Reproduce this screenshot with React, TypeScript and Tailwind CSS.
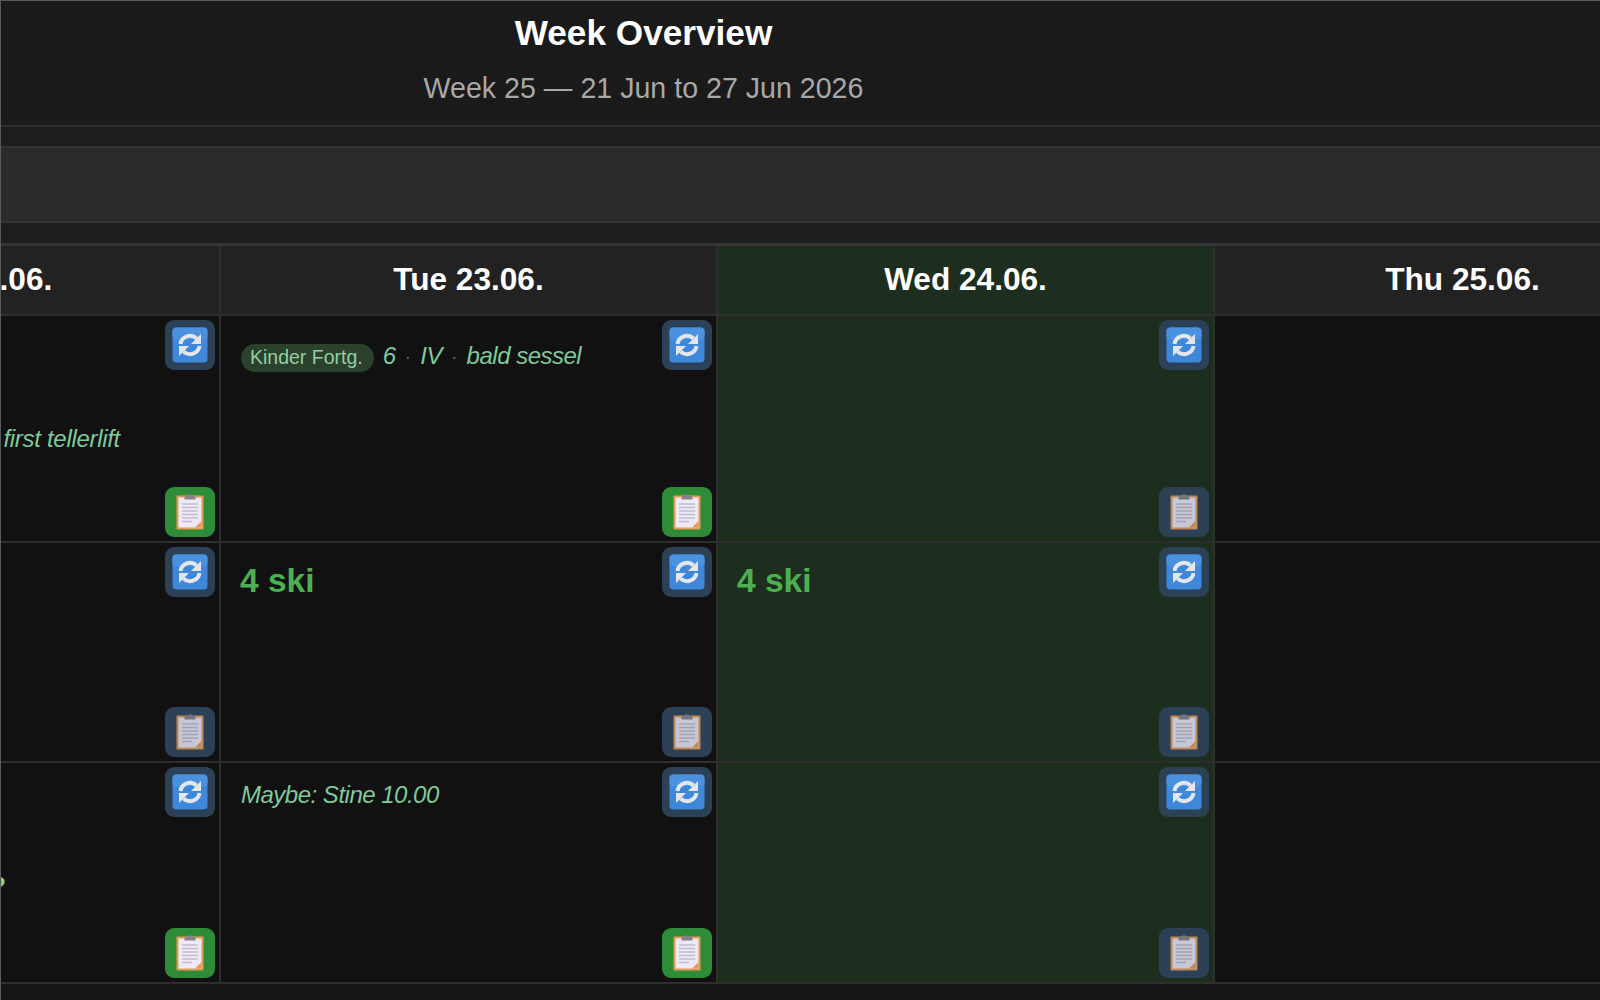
import React from "react";

const SyncIcon = () => (
  <svg width="36" height="36" viewBox="0 0 36 36" className="blur-[0.7px]">
    <rect x="0.5" y="0.5" width="35" height="35" rx="4" fill="#3f87d9" />
    <rect x="0.5" y="0.5" width="35" height="12" rx="4" fill="#4a92e0" />
    <g fill="none" stroke="#e3e6ec" strokeWidth="4">
      <path d="M8.5 17A9.5 9.5 0 0 1 24.5 11.5" />
      <path d="M27.5 19A9.5 9.5 0 0 1 11.5 24.5" />
    </g>
    <path d="M29 7V17H19Z" fill="#e3e6ec" />
    <path d="M7 29V19H17Z" fill="#e3e6ec" />
  </svg>
);

const ClipIcon = ({ dim }: { dim?: boolean }) => (
  <svg width="28" height="36" viewBox="0 0 28 36" className={dim ? "opacity-80 blur-[0.6px]" : "blur-[0.6px]"}>
    <rect x="0.5" y="1.5" width="27" height="34" rx="1" fill="#e59b55" />
    <rect x="2.5" y="3.5" width="23" height="30" fill="#eee9f6" />
    <g stroke="#c0bec9" strokeWidth="1.3">
      <path d="M6 10H22M6 13.5H22M6 17H22M6 20.5H22M6 24H22M6 27.5H16" />
    </g>
    <path d="M8.5 5.5V2.5L11 2 12.5 0.5H15.5L17 2 19.5 2.5V5.5Z" fill="#85828e" />
    <path d="M19 33.5L25.5 27V33.5Z" fill="#e59b55" />
  </svg>
);

const CellButton = ({ kind, on }: { kind: "sync" | "clip"; on?: boolean }) => (
  <div
    className={`flex h-[50px] w-[50px] items-center justify-center rounded-[9px] ${
      on ? "bg-[#2e8b38]" : "bg-[#2c4156]"
    }`}
  >
    {kind === "sync" ? <SyncIcon /> : <ClipIcon dim={!on} />}
  </div>
);

interface CellProps {
  today?: boolean;
  planned?: boolean;
  buttons?: boolean;
  children?: React.ReactNode;
}

const Cell = ({ today, planned, buttons = true, children }: CellProps) => (
  <div
    className={`flex min-h-0 border-r-2 border-b-2 border-[#2e2e2e] pl-[20px] pr-[4px] ${
      today ? "bg-[#1e2e1e]" : "bg-[#111111]"
    }`}
  >
    <div className="min-w-0 flex-1">{children}</div>
    {buttons && (
      <div className="flex flex-col justify-between py-[4px]">
        <CellButton kind="sync" />
        <CellButton kind="clip" on={planned} />
      </div>
    )}
  </div>
);

const DayHead = ({ label, today }: { label: string; today?: boolean }) => (
  <div
    className={`flex items-center justify-center border-r-2 border-b-2 border-[#2e2e2e] text-[31.6px] font-bold text-white ${
      today ? "bg-[#1e2e1e]" : "bg-[#222222]"
    }`}
  >
    {label}
  </div>
);

const Note = ({ children }: { children: React.ReactNode }) => (
  <span className="text-[24px] leading-[30px] italic tracking-[-0.5px] text-[#7fc99b]">{children}</span>
);

const Dot = () => <span className="text-[20px] leading-[30px] text-[#7fc99b] opacity-50">·</span>;

const Ski = () => (
  <div className="-ml-[1px] pt-[18px] text-[33.5px] leading-[40px] font-bold text-[#4caf50]">4 ski</div>
);

export default function App() {
  return (
    <div className="h-[1000px] w-[1600px] overflow-hidden border-t border-l border-[#5a5a5a] bg-[#1e1e1e] font-['Liberation_Sans',Arial,sans-serif]">
      <header className="h-[126px] w-full border-b-2 border-[#2e2e2e] bg-[#1a1a1a]">
        <div className="w-[1285px] pt-[11px] text-center">
          <h1 className="text-[35.2px] leading-[42px] font-bold text-white">Week Overview</h1>
          <p className="mt-[16px] text-[28.6px] leading-[36px] text-[#a8a8a8]">
            Week 25 — 21 Jun to 27 Jun 2026
          </p>
        </div>
      </header>

      <div className="mt-[19px] h-[77px] border-y-2 border-[#333333] bg-[#2b2b2b]" />

      <div className="mt-[20px] h-[760px] overflow-hidden border-t-[3px] border-[#353535] bg-[#161616]">
        <div className="-ml-[277px] grid w-[1988px] grid-cols-[repeat(4,497px)] grid-rows-[70px_227px_220px_221px]">
          <DayHead label="Mon 22.06." />
          <DayHead label="Tue 23.06." />
          <DayHead label="Wed 24.06." today />
          <DayHead label="Thu 25.06." />

          <Cell planned>
            <div className="pt-[108px] pr-[45px] text-right whitespace-nowrap">
              <span className="text-[24px] leading-[30px] italic tracking-[-0.3px] text-[#7fc99b]">
                first tellerlift
              </span>
            </div>
          </Cell>
          <Cell planned>
            <div className="flex items-start gap-[9px] pt-[25px] whitespace-nowrap">
              <span className="mt-[3px] flex h-[28px] items-center rounded-full bg-[#2b402d] pr-[11px] pl-[9px] pb-[1px] text-[19.5px] text-[#93cfa0]">
                Kinder Fortg.
              </span>
              <Note>6</Note>
              <Dot />
              <Note>IV</Note>
              <Dot />
              <Note>bald sessel</Note>
            </div>
          </Cell>
          <Cell today />
          <Cell buttons={false} />

          <Cell />
          <Cell>
            <Ski />
          </Cell>
          <Cell today>
            <Ski />
          </Cell>
          <Cell buttons={false} />

          <Cell planned>
            <div className="pt-[108px] pr-[159px] text-right whitespace-nowrap">
              <span className="text-[24px] leading-[30px] font-bold text-[#86d08f]">?</span>
            </div>
          </Cell>
          <Cell planned>
            <div className="pt-[17px] whitespace-nowrap">
              <Note>Maybe: Stine 10.00</Note>
            </div>
          </Cell>
          <Cell today />
          <Cell buttons={false} />
        </div>
      </div>
    </div>
  );
}
